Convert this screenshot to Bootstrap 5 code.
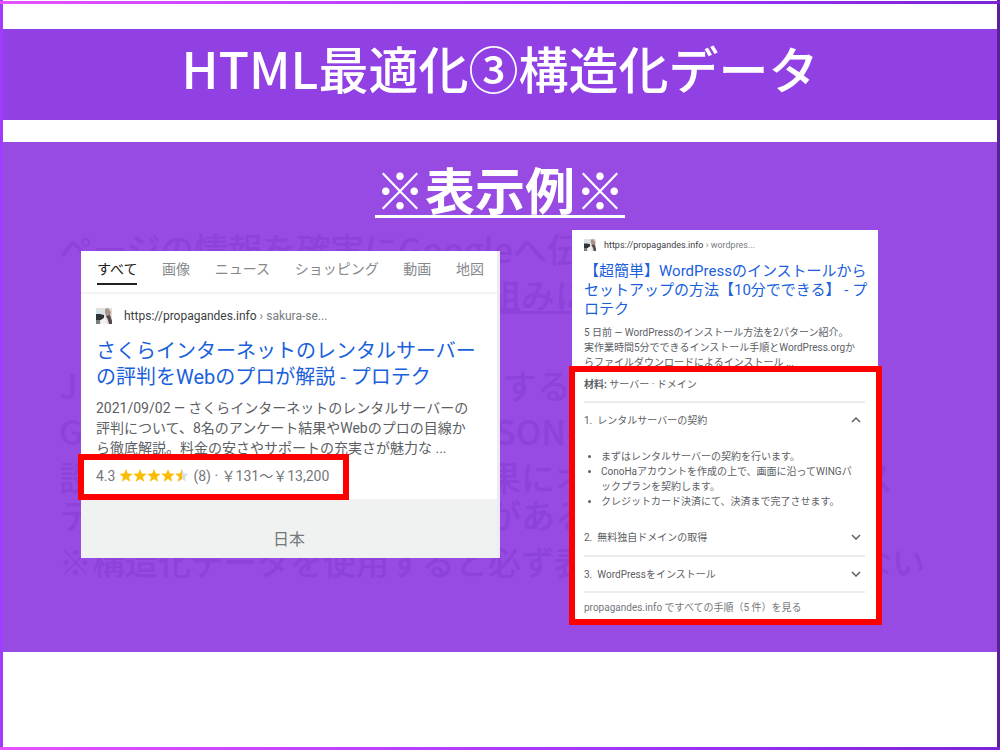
<!DOCTYPE html>
<html lang="ja">
<head>
<meta charset="utf-8">
<meta name="viewport" content="width=device-width, initial-scale=1">
<title>HTML最適化③構造化データ</title>
<link rel="stylesheet" href="https://cdn.jsdelivr.net/npm/bootstrap@5.3.0/dist/css/bootstrap.min.css">
<style>
body{font-family:Roboto,"Noto Sans CJK JP",sans-serif;background:#fff}
a{text-decoration:none;color:#1a5fdc}
.slide{min-height:100vh;padding:28px 3px 0;position:relative;
  background:linear-gradient(90deg,#e650ff,#a236ff 60%,#7b22d8) 0 1px/100% 3px no-repeat,
  linear-gradient(90deg,#e650ff,#a236ff 60%,#7b22d8) 0 100%/100% 3px no-repeat,
  linear-gradient(#a03cff,#a03cff) 0 0/3px 100% no-repeat,
  linear-gradient(#5a1f9a,#5a1f9a) 100% 0/3px 100% no-repeat,#fff}
.banner{background:#9140e3;height:91px;margin-top:1px;margin-bottom:22px}
.banner h1,.stage h2,.ghost{font-family:"Noto Sans CJK JP",sans-serif}
.banner h1{font-size:50px;line-height:76px;font-weight:500}
.stage{background:#974be2;height:510px;position:relative}
.stage h2{font-size:50px;line-height:74px;font-weight:700;padding-top:9px;text-decoration:underline;text-decoration-thickness:3px;text-underline-offset:5px}
.ghost{position:absolute;inset:84px 0 auto 56px;color:#8d42d9;font-size:34px;font-weight:500;line-height:46px;white-space:nowrap;z-index:0}
.ghost-row{display:grid;grid-template-columns:428px 372px auto}
.ghost .fine{font-size:33px;grid-template-columns:800px auto;margin-top:8px}
.ghost .gap-up{margin-top:44px}
.ghost .tight{line-height:30px}
.cards{position:relative;z-index:1;padding:0 119px 0 78px}
.shot{background:#fff;color:#5c6065}
.shot-a{width:419px;margin-top:26px;border-right:3px solid #eceaf6}
.tabs{height:43px;padding:6px 13px 0 16px;font-size:14px;line-height:24px;border-bottom:2px solid #f3f3f4;color:#85888c}
.tabs a{color:inherit}
.tabs a.current{color:#222;border-bottom:2px solid #222;height:28px}
.site{color:#3c4043}
.site span{color:#777b80}
.shot-a .site{font-size:12px;line-height:18px;padding:13px 0 0 15px;gap:12px}
.shot-a h3{font-size:20px;line-height:26px;font-weight:400;margin:13px 0 0 15px}
.shot-a p{font-size:14px;line-height:20px;margin:8px 0 0 15px}
.rating{border:6px solid #f00;height:46px;width:271px;margin:-4px 0 -1px -3px;padding-left:12px;font-size:14px;line-height:33px;background:#fff;position:relative;color:#74777b}
.region{height:59px;background:#f0f2f2;text-align:center;font-size:16px;line-height:40px;padding-top:21px;color:#74777b}
.shot-b{width:306px;margin-top:5px}
.shot-b .site{font-size:9px;line-height:14px;padding:8px 0 0 12px;gap:8px}
.shot-b h3{font-size:15px;line-height:19px;font-weight:400;margin:10px 0 0 12px}
.shot-b p{font-size:10px;line-height:15px;margin:6px 0 0 12px}
.steps{border:6px solid #f00;margin:-4px -4px 0 -3px;padding:5px 11px 2px 9px;font-size:10px;height:259px;background:#fff;position:relative}
.steps .materials{line-height:16px;padding-bottom:8px}
.step{width:100%;height:36px;border:0;border-top:2px solid #ececec;background:none;padding:0 4px 0 0;font-size:10px;color:#5c6065}
.steps ul{margin:12px 0 10px;padding-left:17px;line-height:15px}
.steps .more{border-top:2px solid #ececec;line-height:30px}
.steps .more a{color:#74777b}
</style>
</head>
<body>
<main class="slide">
  <header class="banner"><h1 class="text-center text-white m-0">HTML最適化③構造化データ</h1></header>
  <section class="stage">
    <div class="ghost" aria-hidden="true">
      <div>ページの情報を確実にGoogleへ伝</div>
      <div class="ghost-row"><span></span><u>組みに</u></div>
      <div class="ghost-row gap-up"><span>J</span><span class="ps-3">する</span></div>
      <div class="ghost-row"><span>G</span><span class="ps-2">SON-</span></div>
      <div class="ghost-row"><span>設</span><span>果にオ</span><span>ス</span></div>
      <div class="ghost-row tight"><span>テ</span><span>がある</span></div>
      <div class="ghost-row fine"><span>※構造化データを使用すると必ず表</span><span>ない</span></div>
    </div>
    <h2 class="text-center text-white m-0">※表示例※</h2>
    <div class="cards d-flex justify-content-between align-items-start">
      <article class="shot shot-a">
        <nav class="tabs d-flex justify-content-between"><a class="current" href="#">すべて</a><a href="#">画像</a><a href="#">ニュース</a><a href="#">ショッピング</a><a href="#">動画</a><a href="#">地図</a></nav>
        <div class="site d-flex align-items-center">
          <svg width="16" height="16" viewBox="0 0 16 16"><use href="#favicon"/></svg>
          <div>https://propagandes.info <span>› sakura-se...</span></div>
        </div>
        <h3><a href="#">さくらインターネットのレンタルサーバー<br>の評判をWebのプロが解説 - プロテク</a></h3>
        <p>2021/09/02 — さくらインターネットのレンタルサーバーの<br>評判について、8名のアンケート結果やWebのプロの目線か<br>ら徹底解説。料金の安さやサポートの充実さが魅力な ...</p>
        <div class="rating d-flex">4.3
          <svg class="ms-1 me-1 mt-2" width="70" height="16" viewBox="0 0 70 16">
            <defs><path id="star" d="M7 1l1.800 4.500 4.900.3-3.800 3.100 1.300 4.800L7 11l-4.200 2.700 1.300-4.800L.3 5.800l4.900-.3z"/></defs>
            <g fill="#fbbc04"><use href="#star"/><use href="#star" x="14"/><use href="#star" x="28"/><use href="#star" x="42"/></g>
            <use href="#star" x="56" fill="#dadce0"/><path fill="#fbbc04" d="M63 1v10l-4.200 2.700 1.300-4.800-3.800-3.100 4.900-.3z"/>
          </svg>(8) · ￥131～￥13,200</div>
        <div class="region">日本</div>
      </article>
      <article class="shot shot-b">
        <div class="site d-flex align-items-center">
          <svg width="12" height="12" viewBox="0 0 16 16">
            <defs><g id="favicon"><path fill="#e3e0dc" d="M0 0h16v16H0z"/><path fill="#d4e4ea" d="M0 2h8v4H0z"/><path fill="#2f3236" d="M0 6h4l4 1v4l-3 1H0z"/><path fill="#a89388" d="M9 1l3-1 3 4-1 4-3 1-2-4z"/><path fill="#55484a" d="M10 8l4-1 2 6v3h-3l-1-4z"/><path fill="#7c7f82" d="M0 12h4v4H0z"/><path fill="#f4f2f0" d="M5 12l4-3 2 7H5z"/></g></defs>
            <use href="#favicon"/></svg>
          <div>https://propagandes.info <span>› wordpres...</span></div>
        </div>
        <h3><a href="#">【超簡単】WordPressのインストールから<br>セットアップの方法【10分でできる】 - プ<br>ロテク</a></h3>
        <p>5 日前 — WordPressのインストール方法を2パターン紹介。<br>実作業時間5分でできるインストール手順とWordPress.orgか<br>らファイルダウンロードによるインストール ...</p>
        <div class="steps">
          <div class="materials"><b>材料:</b> サーバー · ドメイン</div>
          <button class="step d-flex justify-content-between align-items-center" type="button"><span>1.&ensp;レンタルサーバーの契約</span><svg width="10" height="6" viewBox="0 0 10 6" fill="none" stroke="#5c6065" stroke-width="1.500"><path d="M1 5l4-4 4 4"/></svg></button>
          <ul><li>まずはレンタルサーバーの契約を行います。</li><li>ConoHaアカウントを作成の上で、画面に沿ってWINGパ<br>ックプランを契約します。</li><li>クレジットカード決済にて、決済まで完了させます。</li></ul>
          <button class="step d-flex justify-content-between align-items-center border-top-0" type="button"><span>2.&ensp;無料独自ドメインの取得</span><svg width="10" height="6" viewBox="0 0 10 6" fill="none" stroke="#5c6065" stroke-width="1.500"><path d="M1 1l4 4 4-4"/></svg></button>
          <button class="step d-flex justify-content-between align-items-center" type="button"><span>3.&ensp;WordPressをインストール</span><svg width="10" height="6" viewBox="0 0 10 6" fill="none" stroke="#5c6065" stroke-width="1.500"><path d="M1 1l4 4 4-4"/></svg></button>
          <div class="more"><a href="#">propagandes.info ですべての手順（5 件）を見る</a></div>
        </div>
      </article>
    </div>
  </section>
</main>
<script src="https://cdn.jsdelivr.net/npm/bootstrap@5.3.0/dist/js/bootstrap.bundle.min.js"></script>
</body>
</html>
